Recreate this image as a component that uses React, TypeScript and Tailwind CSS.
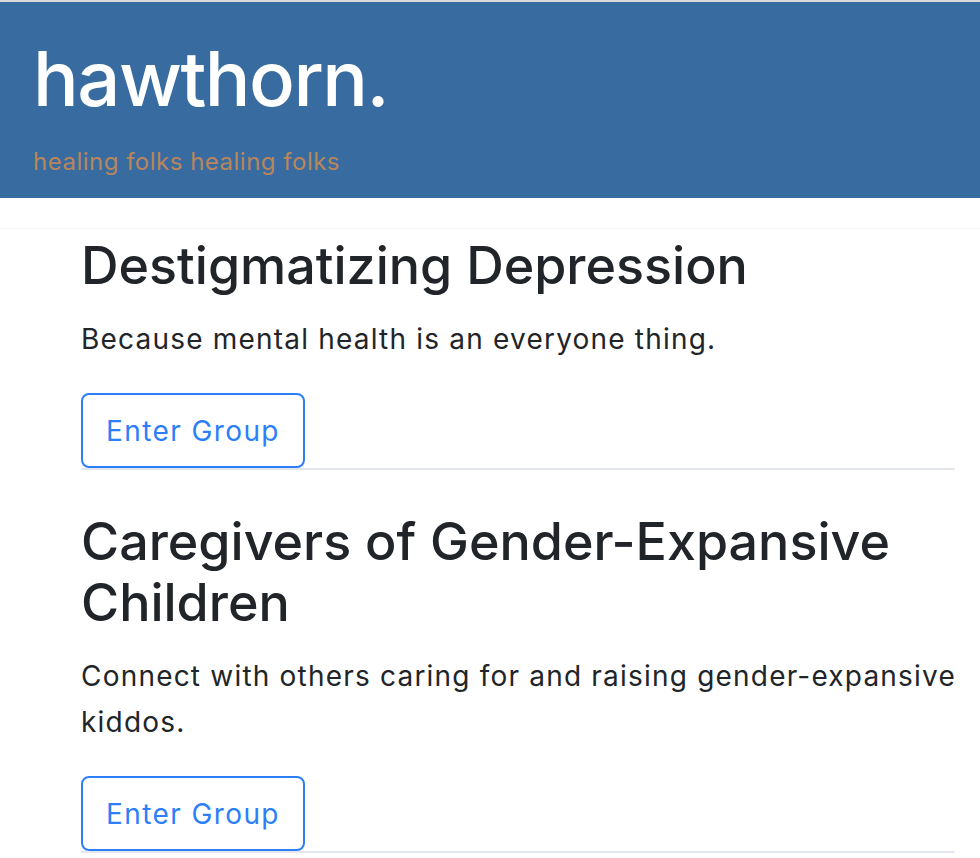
import * as React from 'react';

const groups = [
    {
        title: 'Destigmatizing Depression',
        blurb: 'Because mental health is an everyone thing.',
    },
    {
        title: 'Caregivers of Gender-Expansive Children',
        blurb: 'Connect with others caring for and raising gender-expansive kiddos.',
    },
];

function GroupCard({ title, blurb }: { title: string; blurb: string }) {
    return (
        <section className="pt-[6px]">
            <h1 className="m-0 text-[52px] leading-[61px] font-medium text-[#212529]">{title}</h1>
            <p className="mt-[20px] mb-0 mr-[-12px] text-[28px] leading-[46px] tracking-[1.2px] text-[#212529]">{blurb}</p>
            <button
                type="button"
                className="mt-[31px] block w-[224px] h-[75px] rounded-[8px] border-2 border-[#2d7ff9] bg-white text-[28px] tracking-[1.4px] text-[#2d7ff9]"
            >
                Enter Group
            </button>
            <hr className="m-0 border-0 border-t-2 border-[#e3e6ea]" />
        </section>
    );
}

export default function App() {
    return (
        <div className="min-h-[858px] bg-white font-['Inter','Noto_Sans',sans-serif]">
            <div className="h-[2px] bg-[#d9d9d9]" />
            <header className="h-[196px] bg-[#386ca1] pl-[33px] pt-[31px]">
                <div className="text-[76px] leading-[90px] font-medium text-white tracking-[-1.5px]">hawthorn.</div>
                <div className="mt-[24px] text-[24px] leading-[30px] tracking-[0.5px] text-[#b8865a]">healing folks healing folks</div>
            </header>
            <main className="mt-[30px] border-t border-[#f7f7f7] pl-[81px] pr-[25px]">
                <div className="flex flex-col gap-[35px]">
                    {groups.map((g) => (
                        <GroupCard key={g.title} title={g.title} blurb={g.blurb} />
                    ))}
                </div>
            </main>
        </div>
    );
}
